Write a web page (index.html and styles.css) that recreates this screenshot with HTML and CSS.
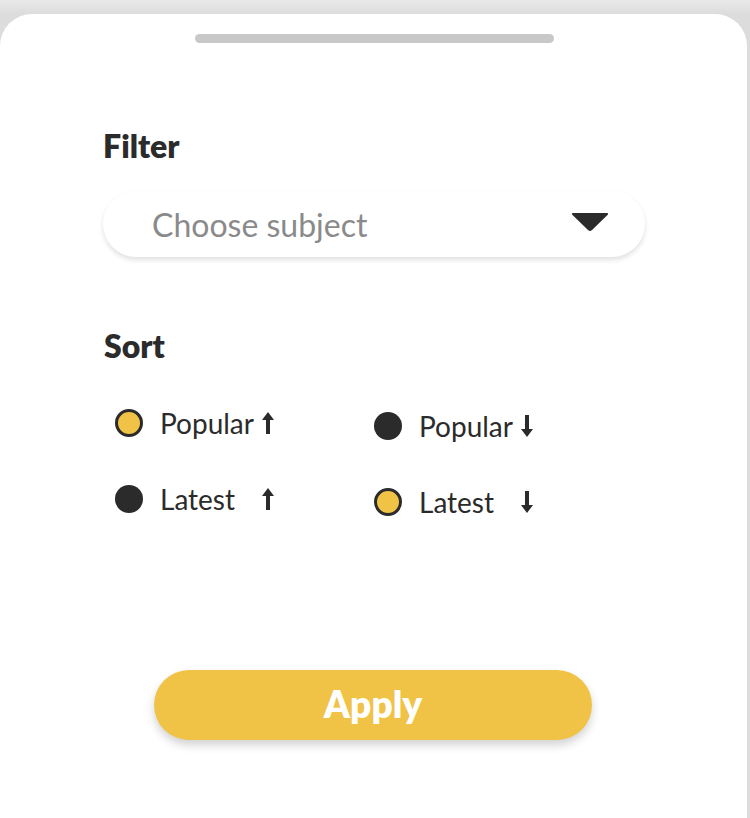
FILE: index.html
```html
<!DOCTYPE html>
<html lang="en">
<head>
  <meta charset="UTF-8">
  <meta name="viewport" content="width=device-width, initial-scale=1.0">
  <title>Filter &amp; Sort</title>
  <link rel="stylesheet" href="styles.css">
</head>
<body>
  <div class="sheet">
    <div class="handle"></div>

    <!-- Filter -->
    <h2 class="label filter-label">Filter</h2>
    <div class="select">
      <span class="placeholder">Choose subject</span>
      <svg class="caret" width="38" height="20" viewBox="0 0 38 20"><path d="M2 1 H36 Q38 1 36.5 3 L21 18 Q19 20 17 18 L1.5 3 Q0 1 2 1 Z" fill="#2b2b2b"/></svg>
    </div>

    <!-- Sort -->
    <h2 class="label sort-label">Sort</h2>
    <div class="sort-grid">
      <div class="option"><span class="dot on"></span><span class="text">Popular</span>
        <svg class="arrow" width="14" height="24" viewBox="0 0 14 24"><path d="M7 1 L13 9 H9 V23 H5 V9 H1 Z" fill="#2b2b2b"/></svg></div>
      <div class="option low"><span class="dot"></span><span class="text">Popular</span>
        <svg class="arrow" width="14" height="24" viewBox="0 0 14 24"><path d="M7 23 L13 15 H9 V1 H5 V15 H1 Z" fill="#2b2b2b"/></svg></div>
      <div class="option"><span class="dot"></span><span class="text">Latest</span>
        <svg class="arrow" width="14" height="24" viewBox="0 0 14 24"><path d="M7 1 L13 9 H9 V23 H5 V9 H1 Z" fill="#2b2b2b"/></svg></div>
      <div class="option low"><span class="dot on"></span><span class="text">Latest</span>
        <svg class="arrow" width="14" height="24" viewBox="0 0 14 24"><path d="M7 23 L13 15 H9 V1 H5 V15 H1 Z" fill="#2b2b2b"/></svg></div>
    </div>

    <button class="apply">Apply</button>
  </div>
</body>
</html>
```

FILE: styles.css
```css
html, body {
  margin: 0;
  height: 100%;
}
body {
  font-family: Lato, "Open Sans", sans-serif;
  background: linear-gradient(#e9e9e9, #dcdcdc 14px);
  color: #2b2b2b;
  overflow: hidden;
}
.sheet {
  margin-top: 14px;
  width: 747px;
  height: 804px;
  background: #fff;
  border-radius: 32px 32px 0 0;
  box-sizing: border-box;
  padding: 20px 0 0 103px;
  position: relative;
}
.handle {
  width: 359px;
  height: 9px;
  border-radius: 5px;
  background: #c8c8c8;
  margin: 0 0 0 92px;
}
.label {
  font-size: 32px;
  font-weight: 800;
  margin: 0;
  line-height: 38px;
}
.filter-label {
  margin-top: 84px;
}
.select {
  margin-top: 26px;
  width: 542px;
  height: 66px;
  border-radius: 34px;
  background: #fff;
  box-shadow: 0 3px 5px rgba(0,0,0,0.12);
  display: flex;
  align-items: center;
  justify-content: space-between;
  padding: 0 36px 0 49px;
  box-sizing: border-box;
}
.placeholder {
  font-size: 32px;
  color: #8a8a8a;
}
.caret {
  margin-top: -4px;
}
.sort-label {
  margin-top: 70px;
  margin-left: 1px;
}
.sort-grid {
  margin-top: 43px;
  margin-left: 12px;
  display: grid;
  grid-template-columns: 259px 200px;
  row-gap: 43px;
}
.option {
  display: flex;
  align-items: center;
  height: 30px;
  font-size: 28px;
}
.option.low {
  margin-top: 3px;
}
.dot {
  width: 28px;
  height: 28px;
  border-radius: 50%;
  background: #2b2b2b;
  box-sizing: border-box;
  margin-right: 17px;
}
.dot.on {
  background: #f0c245;
  border: 3px solid #2b2b2b;
}
.text {
  width: 100px;
}
.arrow {
  margin-left: 1px;
}
.apply {
  display: block;
  margin: 153px 0 0 51px;
  width: 438px;
  height: 70px;
  border: none;
  border-radius: 35px;
  background: #f0c245;
  color: #fff;
  font-family: inherit;
  font-size: 37px;
  font-weight: 800;
  padding-bottom: 4px;
  box-shadow: 0 5px 10px rgba(0,0,0,0.18);
}
```
